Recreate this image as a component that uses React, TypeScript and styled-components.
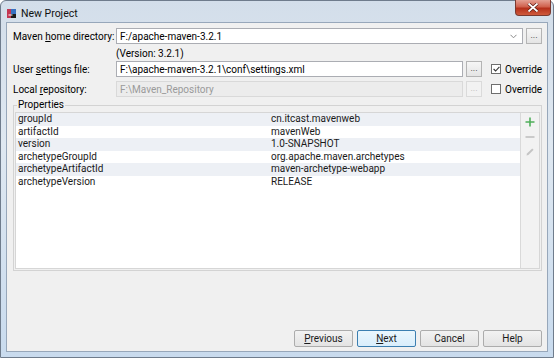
import styled, { createGlobalStyle } from 'styled-components'

const GlobalStyle = createGlobalStyle`
  html, body { margin: 0; padding: 0; background: #ffffff; }
  body { font-family: Roboto, "Liberation Sans", sans-serif; }
`

const properties = [
  { name: 'groupId', value: 'cn.itcast.mavenweb' },
  { name: 'artifactId', value: 'mavenWeb' },
  { name: 'version', value: '1.0-SNAPSHOT' },
  { name: 'archetypeGroupId', value: 'org.apache.maven.archetypes' },
  { name: 'archetypeArtifactId', value: 'maven-archetype-webapp' },
  { name: 'archetypeVersion', value: 'RELEASE' },
]

export default function App() {
  return (
    <>
      <GlobalStyle />
      <Window>
        <TitleBar>
          <TitleIcon>
            <svg width="9" height="9" viewBox="0 0 9 9">
              <rect width="9" height="9" fill="#1b1b1b" />
              <rect x="0" y="0" width="4" height="9" fill="#d63b5a" opacity="0.9" />
              <rect x="4" y="0" width="5" height="5" fill="#3a7bd5" opacity="0.9" />
              <rect x="1.5" y="5.5" width="4" height="1" fill="#ffffff" />
            </svg>
          </TitleIcon>
          <TitleText>New Project</TitleText>
          <CloseButton>
            <svg width="12" height="9" viewBox="0 0 12 9">
              <path d="M1.5 0.5 L10.5 8.5 M10.5 0.5 L1.5 8.5" stroke="#5a1c14" strokeWidth="3.2" />
              <path d="M1.5 0.5 L10.5 8.5 M10.5 0.5 L1.5 8.5" stroke="#ffffff" strokeWidth="1.8" />
            </svg>
          </CloseButton>
        </TitleBar>
        <Client>
          <FormRow $top={5}>
            <Label>Maven <u>h</u>ome directory:</Label>
            <Combo>
              <FieldText>F:/apache-maven-3.2.1</FieldText>
              <svg width="7" height="5" viewBox="0 0 7 5">
                <path d="M0.5 0.8 L3.5 3.8 L6.5 0.8" fill="none" stroke="#8a8a8a" strokeWidth="1" />
              </svg>
            </Combo>
            <BrowseButton>...</BrowseButton>
          </FormRow>
          <VersionNote>(Version: 3.2.1)</VersionNote>
          <FormRow $top={1}>
            <Label>User <u>s</u>ettings file:</Label>
            <TextField>
              <FieldText>F:\apache-maven-3.2.1\conf\settings.xml</FieldText>
            </TextField>
            <BrowseButton>...</BrowseButton>
            <CheckLabel>
              <CheckBox>
                <svg width="7" height="6" viewBox="0 0 7 6">
                  <path d="M0.6 3 L2.6 5 L6.4 0.8" fill="none" stroke="#333" strokeWidth="1.1" />
                </svg>
              </CheckBox>
              Override
            </CheckLabel>
          </FormRow>
          <FormRow $top={4}>
            <Label>Local <u>r</u>epository:</Label>
            <TextField $disabled>
              <FieldText $disabled>F:\Maven_Repository</FieldText>
            </TextField>
            <BrowseButton $disabled>...</BrowseButton>
            <CheckLabel>
              <CheckBox />
              Override
            </CheckLabel>
          </FormRow>
          <PropsSet>
            <Legend>Properties</Legend>
            <PropsBody>
              <Table>
                {properties.map((p, i) => (
                  <Row key={p.name} $alt={i % 2 === 0}>
                    <Cell>{p.name}</Cell>
                    <Cell>{p.value}</Cell>
                  </Row>
                ))}
              </Table>
              <SideTools>
                <ToolButton>
                  <svg width="10" height="10" viewBox="0 0 10 10">
                    <path d="M5 0.5 V9.5 M0.5 5 H9.5" stroke="#4fae5a" strokeWidth="1.6" />
                  </svg>
                </ToolButton>
                <ToolButton>
                  <svg width="10" height="10" viewBox="0 0 10 10">
                    <path d="M0.5 5 H9.5" stroke="#b9b9b9" strokeWidth="1.4" />
                  </svg>
                </ToolButton>
                <ToolButton>
                  <svg width="10" height="10" viewBox="0 0 10 10">
                    <path d="M1.5 8.5 L2 6.6 L7.2 1.4 L8.6 2.8 L3.4 8 Z" fill="#c4c4c4" />
                  </svg>
                </ToolButton>
              </SideTools>
            </PropsBody>
          </PropsSet>
          <Footer>
            <DialogButton><u>P</u>revious</DialogButton>
            <DialogButton $primary><u>N</u>ext</DialogButton>
            <DialogButton>Cancel</DialogButton>
            <DialogButton>Help</DialogButton>
          </Footer>
        </Client>
      </Window>
    </>
  )
}

const Window = styled.div`
  width: 554px;
  height: 358px;
  box-sizing: border-box;
  display: flex;
  flex-direction: column;
  background: linear-gradient(180deg, #d3deea 0%, #dfe8f1 40%, #c9dbee 100%);
  border: 1px solid #6f7c8c;
  border-radius: 6px 6px 0 0;
  padding: 0 5px 5px 5px;
  font-size: 10px;
  color: #000;
`

const TitleBar = styled.div`
  height: 21px;
  display: flex;
  align-items: center;
  position: relative;
  padding-left: 1px;
`

const TitleIcon = styled.span`
  display: flex;
  width: 9px;
  height: 9px;
  margin-top: 4px;
`

const TitleText = styled.span`
  margin-left: 5px;
  margin-top: 3px;
  font-size: 10.5px;
  color: #111;
`

const CloseButton = styled.span`
  position: absolute;
  right: -3px;
  top: -1px;
  width: 36px;
  height: 16px;
  display: flex;
  align-items: center;
  justify-content: center;
  border: 1px solid #7a3a30;
  border-top: none;
  border-radius: 0 0 4px 4px;
  background: linear-gradient(180deg, #e4a093 0%, #d0614d 45%, #b5301b 55%, #cf5a3c 100%);
  box-sizing: border-box;
`

const Client = styled.div`
  flex: 1;
  display: flex;
  flex-direction: column;
  background: #f0f0f0;
  border: 1px solid #97a7ba;
  padding: 0 5px 4px 6px;
`

const FormRow = styled.div<{ $top: number }>`
  display: flex;
  align-items: center;
  height: 16px;
  margin-top: ${({ $top }) => $top}px;
`

const Label = styled.span`
  width: 103px;
  flex-shrink: 0;
  white-space: nowrap;
  padding-top: 1px;
`

const TextField = styled.div<{ $disabled?: boolean }>`
  flex: 1;
  height: 16px;
  box-sizing: border-box;
  display: flex;
  align-items: center;
  padding-left: 3px;
  border: 1px solid ${({ $disabled }) => ($disabled ? '#d9d9d9' : '#abadb3')};
  background: ${({ $disabled }) => ($disabled ? '#ececec' : '#ffffff')};
`

const Combo = styled(TextField)`
  justify-content: space-between;
  padding-right: 5px;
`

const FieldText = styled.span<{ $disabled?: boolean }>`
  color: ${({ $disabled }) => ($disabled ? '#9a9a9a' : '#000')};
  white-space: nowrap;
`

const BrowseButton = styled.div<{ $disabled?: boolean }>`
  width: 16px;
  height: 16px;
  box-sizing: border-box;
  margin-left: 3px;
  flex-shrink: 0;
  display: flex;
  justify-content: center;
  align-items: flex-end;
  padding-bottom: 3px;
  font-size: 9px;
  line-height: 1;
  color: ${({ $disabled }) => ($disabled ? '#b8b8b8' : '#333')};
  border: 1px solid ${({ $disabled }) => ($disabled ? '#dadada' : '#b4b4b4')};
  background: ${({ $disabled }) => ($disabled ? '#f2f2f2' : 'linear-gradient(180deg, #f6f6f6, #e4e4e4)')};
`

const CheckLabel = styled.label`
  display: flex;
  align-items: center;
  margin-left: 9px;
  width: 51px;
  flex-shrink: 0;
  gap: 4px;
  white-space: nowrap;
`

const CheckBox = styled.span`
  width: 10px;
  height: 10px;
  flex-shrink: 0;
  box-sizing: border-box;
  border: 1px solid #6e6e6e;
  background: #fff;
  display: flex;
  align-items: center;
  justify-content: center;
`

const VersionNote = styled.div`
  margin: 4px 0 0 103px;
  height: 12px;
  line-height: 12px;
`

const PropsSet = styled.fieldset`
  margin: 3px 0 0 0;
  padding: 0 1px 1px 1px;
  border: 1px solid #d3d3d3;
  min-width: 0;
`

const Legend = styled.legend`
  padding: 0 1px;
  margin-left: 2px;
  font-size: 10px;
  line-height: 10px;
`

const PropsBody = styled.div`
  display: flex;
  box-sizing: border-box;
  height: 157px;
  border: 1px solid #d6d6d6;
  margin-top: 2px;
`

const Table = styled.div`
  flex: 1;
  background: #ffffff;
  border-right: 1px solid #d9d9d9;
`

const Row = styled.div<{ $alt: boolean }>`
  display: grid;
  grid-template-columns: 253px 1fr;
  height: 12.6px;
  line-height: 12.6px;
  background: ${({ $alt }) => ($alt ? '#edf0f5' : '#ffffff')};
`

const Cell = styled.span`
  padding-left: 2px;
  white-space: nowrap;
  color: #1a1a1a;
`

const SideTools = styled.div`
  width: 18px;
  display: flex;
  flex-direction: column;
  align-items: center;
  padding-top: 4px;
  gap: 5px;
  background: #f2f2f2;
`

const ToolButton = styled.span`
  display: flex;
  width: 10px;
  height: 10px;
`

const Footer = styled.div`
  margin-top: auto;
  display: flex;
  justify-content: flex-end;
  gap: 4px;
`

const DialogButton = styled.button<{ $primary?: boolean }>`
  width: 59px;
  height: 17px;
  padding: 0;
  font-family: Roboto, "Liberation Sans", sans-serif;
  font-size: 10px;
  color: #1a1a1a;
  border: 1px solid ${({ $primary }) => ($primary ? '#3c7fb1' : '#acacac')};
  border-radius: 2px;
  background: ${({ $primary }) =>
    $primary ? 'linear-gradient(180deg, #eaf6fd, #d9eefc)' : 'linear-gradient(180deg, #f2f2f2, #e3e3e3)'};
  u { text-decoration: underline; }
`
